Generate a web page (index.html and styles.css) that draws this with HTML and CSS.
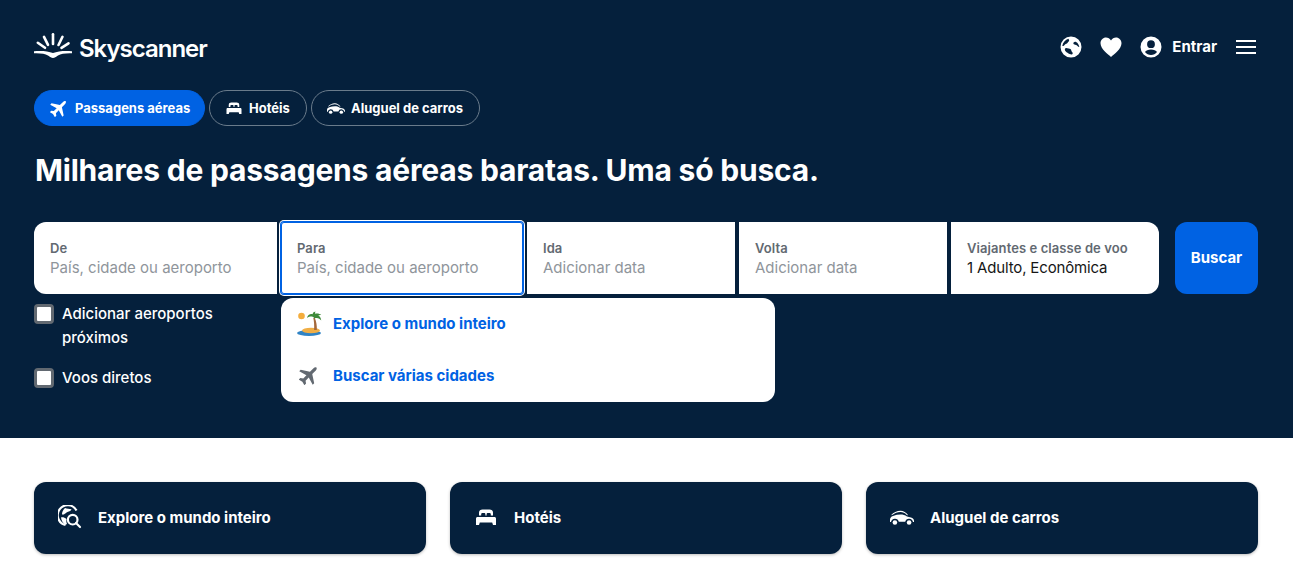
FILE: index.html
```html
<!DOCTYPE html>
<html lang="pt-BR">
<head>
<meta charset="utf-8">
<title>Skyscanner</title>
<link rel="stylesheet" href="styles.css">
</head>
<body>
<svg class="defs" width="0" height="0" aria-hidden="true">
  <symbol id="i-plane" viewBox="1.500 1.500 21 21"><path transform="rotate(45 12 12)" d="M22 16.500v-2.200l-8.300-5.400V3.600C13.700 2.400 13 1 12 1s-1.700 1.400-1.700 2.600v5.300L2 14.300v2.200l8.300-2.400v4.700L7.800 20.600V23l4.200-1.100 4.200 1.100v-2.400l-2.500-1.800v-4.700z"/></symbol>
  <symbol id="i-bed" viewBox="0 0 24 24"><path d="M5 10.500V7.500C5 5.500 6.500 4.500 8.500 4.500h7c2 0 3.500 1 3.500 3v3h-2.200V9.200c0-.8-.6-1.300-1.300-1.300h-1.600c-.7 0-1.300.5-1.300 1.300v1.300h-1.200V9.200c0-.8-.6-1.300-1.300-1.300H8.500c-.7 0-1.300.5-1.300 1.300v1.300z"/><path d="M3.500 12h17c.8 0 1.500.7 1.500 1.500V20h-3l-.8-2.500H5.800L5 20H2v-6.500c0-.8.700-1.500 1.500-1.500z"/></symbol>
  <symbol id="i-car" viewBox="0 0 24 24"><path d="M1 10.200C3.500 7.500 7 5.800 10.500 5.800c3 0 5.500 1.700 7.700 4.400l-1.400-.2C14.800 8 12.800 7.100 10.500 7.100 7.500 7.100 4.500 8.300 2.700 9.800z"/><path d="M0 17v-2.500c0-1.600 1-3 3-3.600 2.500-.8 5-1.300 7.500-1.300 2.500 0 4.500.6 6.500 2l3 .6c2.500.5 4 1.600 4 3.500V17h-1a4 4 0 0 0-7.800-.3H8.800a4 4 0 0 0-7.800.3z"/><circle cx="4.900" cy="17.500" r="2.300"/><circle cx="19.100" cy="17.500" r="2.300"/></symbol>
  <symbol id="i-globe" viewBox="0 0 24 24"><path fill-rule="evenodd" d="M12 1.500a10.500 10.500 0 1 1 0 21 10.500 10.500 0 0 1 0-21zM9.500 3.700C6.300 4.700 3.800 7.500 3.300 11c1 .4 1.700-.4 2.500-1.300 1-1.100 2.400-1 3-2.200.5-1 1.600-1.100 1.300-2.200-.1-.6-.5-1.100-.6-1.600zM6.500 13.200c-1.200.7-.6 2.200.3 3.200.9 1 2.400 1.800 3.800 2.500 1.100.5 2.800 1 3.100-.5.200-1.200-1.400-1.600-1.400-2.800 0-1.300-1.300-2-2.600-2.100-1.300-.1-2.500-.9-3.200-.3zM15.500 7c-1 .3-1.600 1.500-.7 2.200.9.700 2 .4 2.900 1.100.8.600 1.300 1.900 2.600 1.800-.1-2-1.500-4.400-3.300-5.200-.5-.200-1-.100-1.500.100z"/></symbol>
  <symbol id="i-heart" viewBox="0 0 24 24"><path d="M12 22C9 19.400 1.500 14 1.500 8.300 1.500 5 4 2.500 7 2.500c2 0 3.900 1 5 2.900 1.100-1.900 3-2.900 5-2.900 3 0 5.500 2.500 5.500 5.800C22.500 14 15 19.400 12 22z"/></symbol>
  <symbol id="i-user" viewBox="0 0 24 24"><path fill-rule="evenodd" d="M12 1.500a10.500 10.500 0 1 1 0 21 10.500 10.500 0 0 1 0-21zM12 5.300a3.900 3.900 0 1 0 0 7.800 3.900 3.900 0 0 0 0-7.800zM12 14.600c-2.700 0-5.200 1-6 2.500 1.400 1.800 3.600 3 6 3s4.600-1.200 6-3c-.8-1.500-3.300-2.500-6-2.500z"/></symbol>
  <symbol id="i-explore" viewBox="0 0 24 24">
    <path d="M18.500 5.500A10 10 0 1 0 7.500 20" fill="none" stroke="currentColor" stroke-width="2.200"/>
    <path d="M7 3c2 1.200 4 .6 6.500 1.300-.5 2-3 2.300-5 3.200C7.300 8.500 6 10 4 9.500 3.800 7.500 5 4.800 7 3z"/>
    <path d="M3 12.500c2-.5 3.800.3 5.500 1.500-.3 1.700-.3 3.300.5 5l-1.500.8C5 18.500 3.300 15.500 3 12.500z"/>
    <circle cx="14.700" cy="14.700" r="4.800" fill="none" stroke="currentColor" stroke-width="2.200"/>
    <path d="M18 18l4 4" fill="none" stroke="currentColor" stroke-width="2.200" stroke-linecap="round"/>
  </symbol>
</svg>

<header class="hero">
  <div class="topbar">
    <a class="logo">
      <svg class="logo-mark" viewBox="0 0 38 25" aria-hidden="true">
        <g class="logo-rays">
          <path d="M19 1.300v9.700"/>
          <path d="M10 3.800l4 8"/>
          <path d="M28.500 3.800l-4 8.200"/>
          <path d="M3.800 9.800l7.200 5"/>
          <path d="M34.500 10.300l-7 4.500"/>
        </g>
        <path d="M0 18.200C7 17.600 14 18 19 20c5-2 12-2.400 19-1.800v2C31 20 27 20.800 24 22.500 22 23.800 20.500 25 19 25s-3-1.200-5-2.500C11 20.800 7 20 0 20.200z"/>
      </svg>
      <span class="logo-text">Skyscanner</span>
    </a>
    <nav class="actions">
      <svg class="ico-24"><use href="#i-globe"/></svg>
      <svg class="ico-24"><use href="#i-heart"/></svg>
      <svg class="ico-24"><use href="#i-user"/></svg>
      <span class="signin">Entrar</span>
      <span class="burger"><i></i><i></i><i></i></span>
    </nav>
  </div>

  <div class="tabs">
    <a class="tab tab-active"><svg class="ico-18"><use href="#i-plane"/></svg>Passagens aéreas</a>
    <a class="tab tab-hotel"><svg class="ico-18"><use href="#i-bed"/></svg>Hotéis</a>
    <a class="tab tab-car"><svg class="ico-18"><use href="#i-car"/></svg>Aluguel de carros</a>
  </div>

  <h1 class="headline">Milhares de passagens aéreas baratas. Uma só busca.</h1>

  <div class="search">
    <div class="fields">
      <div class="field field-from"><label>De</label><span class="ph">País, cidade ou aeroporto</span></div>
      <div class="field field-to"><label>Para</label><span class="ph">País, cidade ou aeroporto</span></div>
      <div class="field field-date"><label>Ida</label><span class="ph">Adicionar data</span></div>
      <div class="field field-date"><label>Volta</label><span class="ph">Adicionar data</span></div>
      <div class="field field-pax"><label>Viajantes e classe de voo</label><span class="val">1 Adulto, Econômica</span></div>
    </div>
    <button class="go">Buscar</button>

    <div class="suggest">
      <a class="sug-row">
        <svg class="sug-ico" viewBox="0 0 26 26" aria-hidden="true">
          <circle cx="5.500" cy="6" r="3.300" fill="#f4ad3d"/>
          <ellipse cx="13" cy="23" rx="12" ry="3" fill="#2f83c5"/>
          <ellipse cx="15" cy="20.500" rx="9" ry="2.800" fill="#f0ae45"/>
          <path d="M17.300 8c.8 3.500 1.100 7.500.8 12h2.700c.2-4.500-.4-8.500-2-12z" fill="#a5683a"/>
          <path d="M18.500 8.500c-1.500-2.500-4.500-2.500-7.500-.5.600-2.800 3-4.500 5.800-3.800C16.500 3 17.500 1.800 19.500 1.500c-.5.800-.6 1.500-.3 2.300 1.800-.7 4.300-.3 6 1.200-1.300-.2-2.300 0-3 .4 1.800.9 3 2.800 3 5.100-1.500-2-3.800-3-6.700-2z" fill="#3f8a3a"/>
        </svg>
        <span>Explore o mundo inteiro</span>
      </a>
      <a class="sug-row">
        <svg class="sug-ico sug-plane" viewBox="0 0 24 24"><use href="#i-plane"/></svg>
        <span>Buscar várias cidades</span>
      </a>
    </div>
  </div>

  <div class="opts">
    <label class="opt"><span class="box"></span><span>Adicionar aeroportos próximos</span></label>
    <label class="opt"><span class="box"></span><span>Voos diretos</span></label>
  </div>
</header>

<main class="cards">
  <a class="card"><svg class="ico-24"><use href="#i-explore"/></svg>Explore o mundo inteiro</a>
  <a class="card"><svg class="ico-24"><use href="#i-bed"/></svg>Hotéis</a>
  <a class="card"><svg class="ico-24"><use href="#i-car"/></svg>Aluguel de carros</a>
</main>
</body>
</html>
```
FILE: styles.css
```css
* { box-sizing: border-box; }
html, body { margin: 0; padding: 0; }
body {
  font-family: Inter, "Liberation Sans", sans-serif;
  background: #fff;
  color: #fff;
  overflow: hidden;
}
.defs { position: absolute; }
svg { fill: currentColor; display: block; flex: none; }
.ico-24 { width: 24px; height: 24px; }
.ico-18 { width: 18px; height: 18px; }

.hero {
  background: #05203c;
  height: 438px;
  padding: 34px 35px 0 34px;
}
.topbar {
  display: flex;
  justify-content: space-between;
  align-items: center;
  height: 28px;
}
.logo { display: flex; align-items: center; gap: 7px; }
.logo-mark { width: 38px; height: 25px; margin-top: -5px; fill: #fff; }
.logo-rays path { fill: none; stroke: #fff; stroke-width: 2.600; stroke-linecap: round; }
.logo-text {
  padding-top: 2px;
  font-size: 24px;
  font-weight: 600;
  line-height: 28px;
  letter-spacing: -1px;
}
.actions { display: flex; align-items: center; gap: 16px; margin-top: -2px; margin-right: 2px; }
.signin { font-size: 15px; font-weight: 700; margin-left: -7px; margin-bottom: 2px; }
.burger { display: flex; flex-direction: column; gap: 4px; width: 20px; margin-left: 3px; }
.burger i { display: block; height: 2px; background: #fff; }

.tabs { display: flex; gap: 4px; margin-top: 28px; }
.tab {
  display: flex;
  align-items: center;
  gap: 7px;
  width: 171px;
  height: 36px;
  padding: 0 15px;
  border-radius: 18px;
  border: 1px solid #6a7b8b;
  font-size: 13px;
  font-weight: 700;
  white-space: nowrap;
}
.tab-active { background: #0062e3; border-color: #0062e3; }
.tab-hotel { width: 98px; gap: 6px; }
.tab-car { width: 169px; gap: 6px; }

.headline {
  margin: 26px 0 0 1px;
  font-size: 30px;
  line-height: 36px;
  font-weight: 700;
  letter-spacing: -.2px;
}

.search { position: relative; display: flex; gap: 16px; margin-top: 34px; height: 72px; }
.fields { display: flex; gap: 4px; flex: 1; }
.field {
  display: flex;
  flex-direction: column;
  justify-content: center;
  background: #fff;
  padding: 0 16px;
  height: 72px;
}
.field label { font-size: 13px; line-height: 20px; font-weight: 600; color: #626971; letter-spacing: .08px; }
.ph { font-size: 15px; line-height: 20px; color: #8f959b; }
.val { font-size: 15px; line-height: 20px; color: #161616; letter-spacing: -.15px; }
.field-from { width: 243px; border-radius: 12px 0 0 12px; }
.field-to { width: 242px; border-radius: 3px; box-shadow: inset 0 0 0 1px #0062e3, 0 0 0 1px #0062e3, 0 0 0 2px #fff; }
.field-date { width: 208px; }
.field-pax { width: 208px; border-radius: 0 12px 12px 0; }
.go {
  width: 83px;
  height: 72px;
  padding: 0 0 2px;
  border: 0;
  border-radius: 12px;
  background: #0062e3;
  color: #fff;
  font: 700 15px Inter, sans-serif;
}
.suggest {
  position: absolute;
  left: 247px;
  top: 76px;
  width: 494px;
  height: 104px;
  background: #fff;
  border-radius: 12px;
  color: #0062e3;
}
.sug-row {
  display: flex;
  align-items: center;
  gap: 11px;
  height: 52px;
  padding: 0 0 2px 15px;
  font-size: 15px;
  font-weight: 700;
}
.sug-ico { width: 26px; height: 26px; }
.sug-plane { width: 20px; height: 20px; margin: 0 3px; fill: #626971; }

.opts { display: flex; flex-direction: column; gap: 16px; width: 200px; margin-top: 8px; }
.opt { display: flex; gap: 8px; font-size: 15px; font-weight: 500; line-height: 24px; }
.box {
  flex: none;
  width: 20px;
  height: 20px;
  margin-top: 2px;
  background: #fff;
  border: 3px solid #626971;
  border-radius: 4px;
}

.cards { display: flex; gap: 24px; padding: 44px 35px 21px 34px; }
.card {
  flex: 1;
  display: flex;
  align-items: center;
  gap: 16px;
  height: 72px;
  padding: 0 24px 2px;
  background: #05203c;
  border-radius: 12px;
  box-shadow: 0 1px 3px rgba(37, 32, 31, .3);
  font-size: 15px;
  font-weight: 700;
}
```
